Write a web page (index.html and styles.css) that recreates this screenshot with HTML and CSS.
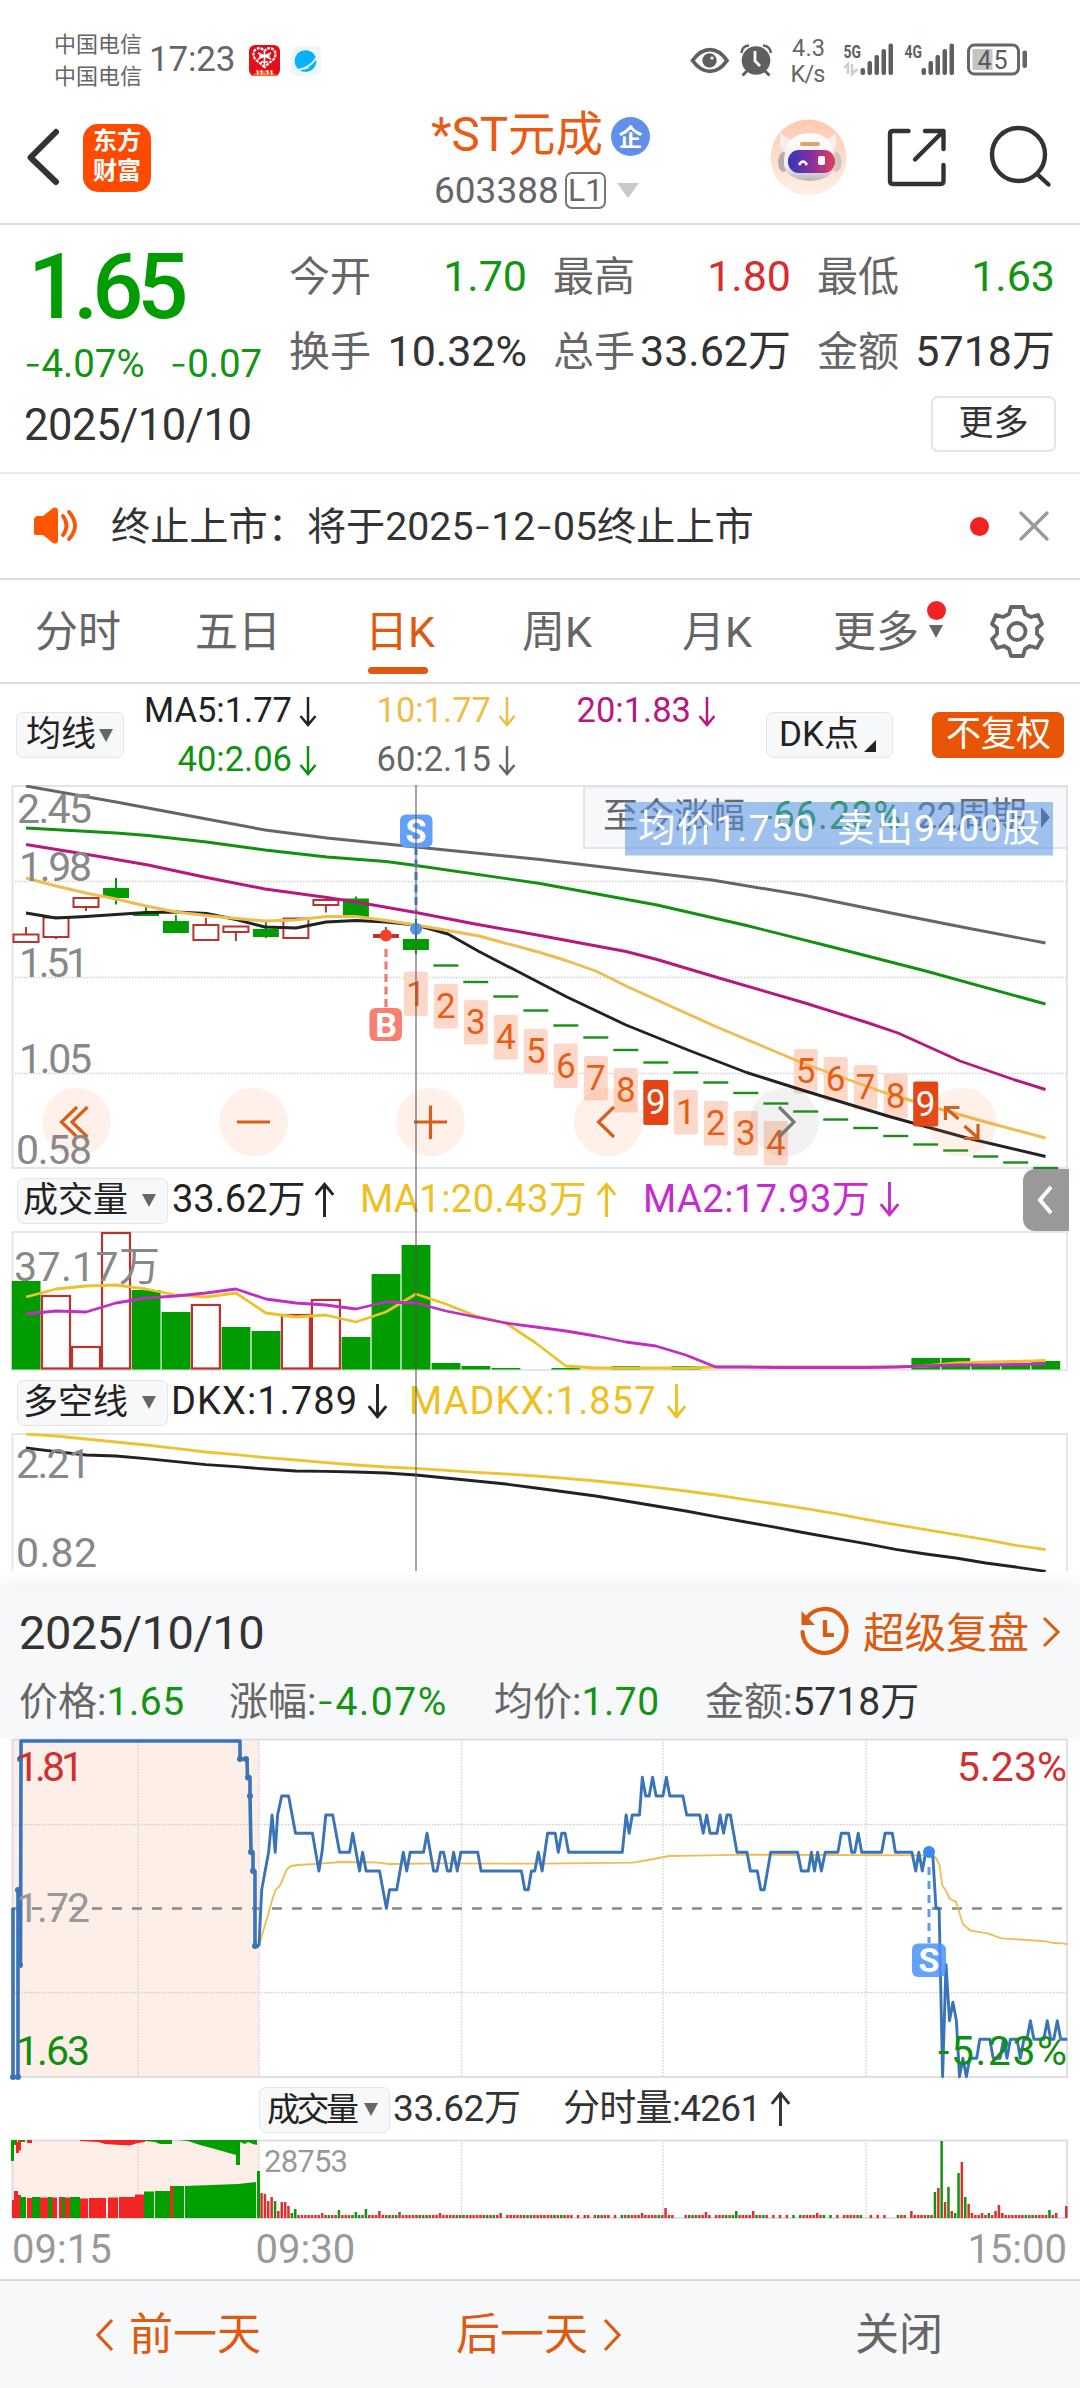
FILE: index.html
```html
<!DOCTYPE html>
<html lang="zh-CN">
<head>
<meta charset="utf-8">
<title>*ST元成 603388</title>
<link rel="stylesheet" href="styles.css">
</head>
<body>
<svg class="defs" aria-hidden="true">
  <symbol id="down" viewBox="0 0 18 30"><path d="M9 0V28M1.5 19L9 28L16.5 19" fill="none" stroke="currentColor" stroke-width="2.5"/></symbol>
  <symbol id="up" viewBox="0 0 18 30"><path d="M9 30V2M1.5 11L9 2L16.5 11" fill="none" stroke="currentColor" stroke-width="2.5"/></symbol>
</svg>
<div class="screen">
  <div class="statusbar">
    <div class="carrier"><span>中国电信</span><span>中国电信</span></div>
    <span class="clock">17:23</span>
    <svg class="app-red" width="31" height="31" viewBox="0 0 31 31"><rect width="31" height="31" rx="6" fill="#e0101a"/><path d="M2 31Q15 20 29 31Z" fill="#f4602c"/><path d="M15.500 22L6 14Q3 9 6 5Q11 1 15.500 6Q20 1 25 5Q28 9 25 14Z" fill="none" stroke="#fff" stroke-width="2.200" stroke-dasharray="3 1"/><path d="M9 8L22 14M22 8L9 14M15.500 7V20M10 11H21M12 17H19" stroke="#fff" stroke-width="1.600"/><text x="15.500" y="30" font-size="7" font-weight="700" fill="#fff" text-anchor="middle">11.11</text></svg>
    <svg class="app-blue" width="30" height="30" viewBox="0 0 30 30"><rect width="30" height="30" rx="6" fill="#eef5fc"/><circle cx="14.500" cy="15" r="10.800" fill="#08b2fb"/><path d="M4 24Q13 24 20 18T26 8" fill="none" stroke="#e9f6ff" stroke-width="1.800"/><path d="M12 22l3-1.500 3-1-1 3-4 1z" fill="#fff"/></svg>
    <svg class="status-icons" width="390" height="60" viewBox="680 30 390 60">
      <g fill="none" stroke="#5f5f5f" stroke-width="3.800"><path d="M693.500 60.500C704 46 718 46 728 60.500C718 75 704 75 693.500 60.500Z"/></g>
      <circle cx="710.500" cy="60.500" r="7.200" fill="#5f5f5f"/><circle cx="713" cy="58" r="1.600" fill="#fff"/>
      <circle cx="757" cy="60.500" r="14.300" fill="#5f5f5f"/><path d="M756 51V61L761 66" stroke="#fff" stroke-width="2.800" fill="none"/>
      <path d="M742.500 53Q743 46 750 45.500M772 53Q771 46 764 45.500" stroke="#5f5f5f" stroke-width="2.500" fill="none"/><path d="M749 70L743.500 75.500M765 70L770.500 75.500" stroke="#5f5f5f" stroke-width="3"/>
      <g fill="#666" font-size="23.500"><text x="793" y="55.500" textLength="33">4.3</text><text x="791.500" y="82" textLength="35">K/s</text></g>
      <g fill="#5f5f5f" font-size="19" font-weight="700"><text x="844.500" y="57.500" textLength="17.500" lengthAdjust="spacingAndGlyphs">5G</text><text x="905.500" y="57.500" textLength="17.500" lengthAdjust="spacingAndGlyphs">4G</text></g>
      <path d="M845 68L849 64V74M853 64V74L857 70M856 70H859" stroke="#ccc" stroke-width="2.400" fill="none"/>
      <g fill="#5f5f5f"><rect x="861.500" y="68" width="4.500" height="7" rx="2"/><rect x="868.500" y="61" width="4.500" height="14" rx="2"/><rect x="875.500" y="55" width="4.500" height="20" rx="2"/><rect x="882.500" y="49" width="4.500" height="26" rx="2"/><rect x="889.500" y="43.500" width="4.500" height="31.500" rx="2"/>
      <rect x="922.500" y="68" width="4.500" height="7" rx="2"/><rect x="929.500" y="61" width="4.500" height="14" rx="2"/><rect x="936.500" y="55" width="4.500" height="20" rx="2"/><rect x="943.500" y="49" width="4.500" height="26" rx="2"/><rect x="950.500" y="43.500" width="4.500" height="31.500" rx="2"/></g>
      <rect x="973.500" y="49" width="20" height="21" fill="#c4c4c4"/><rect x="969.500" y="45" width="50" height="29" rx="6" fill="none" stroke="#666" stroke-width="3"/><rect x="1023.500" y="50.500" width="4.500" height="17.500" rx="2" fill="#666"/>
      <text x="978.500" y="68.500" font-size="25" fill="#5a5a5a" textLength="30">45</text>
    </svg>
  </div>

  <header class="titlebar">
    <svg class="back" width="40" height="60" viewBox="0 0 40 60"><path d="M32 4L6.500 29.500L32 54" fill="none" stroke="#333" stroke-width="6" stroke-linecap="round" stroke-linejoin="round"/></svg>
    <div class="logo"><span>东方</span><span>财富</span></div>
    <div class="stock">
      <div class="stock-name"><span>*ST元成</span><i class="ent">企</i></div>
      <div class="stock-code"><span class="code">603388</span><span class="lv">L1</span><i class="tri-grey"></i></div>
    </div>
    <svg class="head-icons" width="290" height="90" viewBox="765 112 290 90">
      <defs><linearGradient id="halo" x1="0" y1="0" x2="0" y2="1"><stop offset="0" stop-color="#ffc9b0"/><stop offset="1" stop-color="#fff0e9"/></linearGradient><linearGradient id="visor"><stop offset="0" stop-color="#3038b8"/><stop offset=".5" stop-color="#8a2ea0"/><stop offset="1" stop-color="#e0405c"/></linearGradient><linearGradient id="shell" x1="0" y1="0" x2="0" y2="1"><stop offset="0" stop-color="#fff"/><stop offset=".7" stop-color="#f1ecee"/><stop offset="1" stop-color="#b9b2b6"/></linearGradient></defs>
      <circle cx="808.500" cy="157.500" r="38" fill="url(#halo)"/>
      <path d="M781 133Q777 150 787 152L800 140Q788 142 781 133ZM835 133Q839 150 830 152L818 140Q831 141 835 133Z" fill="#f4efef"/>
      <ellipse cx="783.500" cy="162" rx="5.500" ry="10" fill="#b5adb2"/><ellipse cx="836" cy="162" rx="5.500" ry="10" fill="#cfc4c6"/>
      <path d="M784 160Q786 133 810 133Q833 133 835 160Q837 179 810 181Q782 179 784 160Z" fill="url(#shell)"/>
      <rect x="788" y="150" width="47" height="23" rx="11" fill="url(#visor)"/><rect x="800" y="142" width="20" height="4" rx="2" fill="#e5a06c"/><path d="M799 165Q803 158 807 165" stroke="#fff" stroke-width="2.600" fill="none"/><rect x="818" y="156" width="7" height="9" rx="2" fill="#fff"/>
      <g fill="none" stroke="#333" stroke-width="4.400" stroke-linecap="round" stroke-linejoin="round"><path d="M908.500 131H893Q890 131 890 134V181Q890 184 893 184H940.500Q943.500 184 943.500 181V165M925 131H943.500V149M943.500 131L915 159.500"/><circle cx="1018.500" cy="154.500" r="26.500"/><path d="M1037 174L1048.500 184.500"/></g>
    </svg>
  </header>

  <section class="quote">
    <div class="quote-top">
      <div class="price-col"><div class="price">1.65</div><div class="chg"><span><b class="hy">-</b>4.07%</span><span><b class="hy">-</b>0.07</span></div></div>
      <div class="stats">
        <div><label>今开</label><span class="g">1.70</span></div><div><label>最高</label><span class="r">1.80</span></div><div><label>最低</label><span class="g">1.63</span></div>
        <div><label>换手</label><span>10.32%</span></div><div><label>总手</label><span>33.62万</span></div><div><label>金额</label><span>5718万</span></div>
      </div>
    </div>
    <div class="quote-date"><span>2025/10/10</span><button class="more">更多</button></div>
  </section>

  <section class="notice">
    <svg width="48" height="40" viewBox="0 0 48 40"><path d="M1 13Q1 11 4 10H10L20 2Q25 0 25 5V34Q25 39 20 37L10 29H4Q1 29 1 27Z" fill="#fe5500"/><path d="M30 10Q37 20 30 29M36 6Q48 20 36 33" fill="none" stroke="#fe5500" stroke-width="3.800" stroke-linecap="round"/></svg>
    <p>终止上市：将于2025<b class="hy">-</b>12<b class="hy">-</b>05终止上市</p>
    <i class="dot"></i>
    <svg class="close" width="30" height="30" viewBox="0 0 30 30"><path d="M2 2L28 28M28 2L2 28" stroke="#999" stroke-width="3.200" stroke-linecap="round"/></svg>
  </section>

  <nav class="tabs">
    <span>分时</span><span>五日</span><span class="on">日K</span><span>周K</span><span>月K</span><span class="tab-more">更多<i class="tri"></i><i class="dot"></i></span>
    <svg width="54" height="54" viewBox="-27 -27 54 54"><path d="M-6 -24H6L8 -17L14 -14L21 -16L25 -7L20 -3V3L25 8L20 17L13 15L8 18L6 25H-6L-8 18L-13 15L-20 17L-25 8L-20 3V-3L-25 -7L-21 -16L-14 -14L-8 -17Z" fill="none" stroke="#666" stroke-width="3.800" stroke-linejoin="round"/><circle cy=".5" r="8.500" fill="none" stroke="#666" stroke-width="3.800"/></svg>
  </nav>

  <main class="charts">
    <div class="ma-row">
      <button class="pill pill-ma">均线<i class="tri"></i></button>
      <div class="ma-list">
        <span class="c-black">MA5:1.77<svg class="arr"><use href="#down"/></svg></span><span class="c-gold">10:1.77<svg class="arr"><use href="#down"/></svg></span><span class="c-mag">20:1.83<svg class="arr"><use href="#down"/></svg></span>
        <span class="c-green">40:2.06<svg class="arr"><use href="#down"/></svg></span><span class="c-grey">60:2.15<svg class="arr"><use href="#down"/></svg></span>
      </div>
      <button class="pill pill-dk">DK点<i class="corner"></i></button>
      <button class="pill pill-adj">不复权</button>
    </div>
    <svg id="kline" width="1080" height="384" viewBox="0 785 1080 384"></svg>
    <div class="ind-row vol-row">
      <button class="pill pill-ind">成交量<i class="tri"></i></button>
      <span class="i1 c-black">33.62万<svg class="arr"><use href="#up"/></svg></span><span class="i2 c-yel">MA1:20.43万<svg class="arr"><use href="#up"/></svg></span><span class="i3 c-pur">MA2:17.93万<svg class="arr"><use href="#down"/></svg></span>
      <div class="side-tab"><svg width="20" height="30" viewBox="0 0 20 30"><path d="M16 2L5 15L16 28" fill="none" stroke="#fff" stroke-width="4"/></svg></div>
    </div>
    <svg id="volume" width="1080" height="140" viewBox="0 1231 1080 140"></svg>
    <div class="ind-row dkx-row">
      <button class="pill pill-ind">多空线<i class="tri"></i></button>
      <span class="i1 c-black">DKX:1.789<svg class="arr"><use href="#down"/></svg></span><span class="i2 c-yel">MADKX:1.857<svg class="arr"><use href="#down"/></svg></span>
    </div>
    <svg id="dkx" width="1080" height="139" viewBox="0 1433 1080 139"></svg>
    <i class="crosshair"></i>
  </main>

  <section class="replay">
    <div class="replay-head"><span>2025/10/10</span>
      <div class="replay-link"><svg width="54" height="54" viewBox="0 0 54 54"><path d="M8 14A22 22 0 1 1 4.500 27" fill="none" stroke="#dd5a10" stroke-width="4.200" stroke-linecap="round"/><path d="M3.500 6V20H17Z" fill="#dd5a10"/><path d="M27 15V30H36" fill="none" stroke="#dd5a10" stroke-width="4.200"/></svg><span>超级复盘</span><svg width="20" height="32" viewBox="0 0 20 32"><path d="M2 2L16 16L2 30" fill="none" stroke="#dd5a10" stroke-width="3"/></svg></div>
    </div>
    <div class="replay-stats"><span>价格:<em class="g">1.65</em></span><span>涨幅:<em class="g chg-pct"><b class="hy">-</b>4.07%</em></span><span>均价:<em class="g">1.70</em></span><span>金额:<em>5718万</em></span></div>
  </section>

  <svg id="intraday" width="1080" height="342" viewBox="0 1738 1080 342"></svg>
  <div class="mvol-row"><button class="pill pill-mini">成交量<i class="tri"></i></button><span class="m1">33.62万</span><span class="m2">分时量:4261<svg class="arr"><use href="#up"/></svg></span></div>
  <svg id="minvol" width="1080" height="80" viewBox="0 2139 1080 80"></svg>
  <div class="times"><span>09:15</span><span>09:30</span><span>15:00</span></div>

  <footer class="bottom">
    <div class="prev"><svg width="20" height="34" viewBox="0 0 20 34"><path d="M17 2L3 17L17 32" fill="none" stroke="#dd5a10" stroke-width="3.200"/></svg>前一天</div>
    <div class="next">后一天<svg width="20" height="34" viewBox="0 0 20 34"><path d="M3 2L17 17L3 32" fill="none" stroke="#dd5a10" stroke-width="3.200"/></svg></div>
    <div class="shut">关闭</div>
  </footer>
</div>
<script src="charts.js"></script>
</body>
</html>
```

FILE: styles.css
```css
* { box-sizing: border-box; margin: 0; padding: 0; }
body, button { font-family: Roboto, "Noto Sans CJK SC", sans-serif; }
body { width: 1080px; background: #fff; color: #333; }
.screen { width: 1080px; height: 2388px; overflow: hidden; display: flex; flex-direction: column; }
.screen > *, .charts > * { flex: none; }
svg { display: block; }
svg text { font-family: Roboto, "Noto Sans CJK SC", sans-serif; }
.defs { position: absolute; width: 0; height: 0; }
span, p, label, em, button { white-space: nowrap; font-style: normal; }
b.hy { font-family: Inter, sans-serif; font-weight: 300; }
i { display: block; }
.arr { display: inline-block; width: 18px; height: 30px; vertical-align: -5px; margin-left: 7px; }
.tri { width: 0; height: 0; border: 7.5px solid transparent; border-top: 13px solid #666; border-bottom: 0; }
.dot { width: 19px; height: 19px; border-radius: 50%; background: #f12222; }
.g { color: #129512; }
.r { color: #d92d2d; }
.c-black { color: #222; } .c-gold { color: #efbc4c; } .c-mag { color: #b9177f; }
.c-green { color: #0d940d; } .c-grey { color: #666; } .c-yel { color: #efc01f; } .c-pur { color: #c62bcf; }

.statusbar { height: 110px; display: flex; align-items: flex-start; padding: 29px 11px 0 54px; color: #666; }
.carrier { width: 95px; display: flex; flex-direction: column; font-size: 22px; line-height: 32px; }
.clock { width: 100px; font-size: 35px; line-height: 62px; letter-spacing: -.2px; }
.app-red { margin-top: 16px; }
.app-blue { margin: 17px 0 0 11px; }
.status-icons { margin: 1px 0 0 auto; }

.titlebar { height: 115px; border-bottom: 2px solid #dcdcdc; display: flex; align-items: flex-start; padding-left: 24px; }
.back { margin-top: 18px; }
.logo { width: 68px; height: 68px; margin: 14px 0 0 19px; border-radius: 15px; background: #ff4a00; color: #fff; font-weight: 700; font-size: 24px; line-height: 30px; text-align: center; display: flex; flex-direction: column; padding-top: 2px; }
.stock { width: 610px; padding-left: 280px; }
.stock-name { height: 52px; display: flex; align-items: center; font-size: 47.5px; line-height: 52px; color: #ea5a12; gap: 5px; }
.stock-name span { width: 175px; margin-top: -3px; }
.ent { width: 39px; height: 39px; border-radius: 50%; background: #6290e8; color: #fff; font: 700 24px/37px "Noto Sans CJK SC", sans-serif; text-align: center; }
.stock-code { display: flex; align-items: center; height: 57px; font-size: 37px; color: #666; padding-left: 3px; }
.code { width: 131px; }
.lv { width: 41px; height: 37px; border: 2px solid #777; border-radius: 7px; font-size: 32px; line-height: 33px; text-align: center; }
.tri-grey { margin-left: 11px; border: 11px solid transparent; border-top: 15px solid #c9c9c9; border-bottom: 0; }
.head-icons { margin: 2px 0 0 4px; }

.quote { height: 249px; border-bottom: 2px solid #eaeaea; }
.quote-top { display: flex; height: 164px; }
.price-col { width: 289px; padding: 9px 0 0 24px; }
.price { font-size: 90px; line-height: 108px; font-weight: 500; color: #009c00; letter-spacing: -6px; padding-left: 4px; }
.chg { display: flex; font-size: 38.5px; line-height: 42px; gap: 25px; color: #129512; }
.stats { width: 765px; display: grid; grid-template-columns: repeat(3, 238px); column-gap: 26px; grid-auto-rows: 75px; padding-top: 10px; font-size: 43px; }
.stats div { display: flex; justify-content: space-between; align-items: center; }
.stats span { line-height: 60px; padding-top: 6px; }
.stats label { font-size: 41px; color: #666; }
.quote-date { display: flex; justify-content: space-between; align-items: center; height: 70px; padding: 0 24px 0 24px; font-size: 43.500px; letter-spacing: -.4px; }
.quote-date span { padding-top: 3px; }
.more { width: 125px; height: 56px; border: 2px solid #e4e4e4; border-radius: 7px; background: #fff; font-size: 35px; color: #333; line-height: 48px; }

.notice { height: 106px; border-bottom: 2px solid #dcdcdc; display: flex; align-items: center; padding-left: 33px; }
.notice p { font-size: 39.2px; width: 858px; padding: 0 0 6px 30px; }
.notice .dot { margin-left: 31px; }
.notice .close { margin-left: 30px; }

.tabs { height: 104px; border-bottom: 2px solid #dcdcdc; display: grid; grid-template-columns: 160px 170px 157px 160px 151px 157px 60px; align-items: center; padding-left: 35px; font-size: 43px; color: #666; }
.tabs > span { height: 102px; line-height: 104px; }
.on { color: #dd5a10; display: flex; flex-direction: column; }
.on::after { content: ""; width: 60px; height: 7px; margin: -17px 0 0 3px; border-radius: 4px; background: #dd5a10; }
.tab-more { position: relative; }
.tab-more .tri { position: absolute; left: 96px; top: 45px; }
.tab-more .dot { position: absolute; left: 94px; top: 21px; }

.charts { position: relative; }
.pill { display: flex; align-items: center; height: 46px; background: #f7f8fa; border: 1.500px solid #e3e5e8; border-radius: 7px; font-size: 35px; color: #222; line-height: 40px; }
.ma-row { display: flex; height: 101px; }
.pill-ma { width: 108px; margin: 28px 0 0 16px; padding-left: 9px; gap: 3px; }
.pill-dk { width: 127px; margin: 28px 0 0 50px; padding-left: 12px; gap: 5px; }
.pill-adj { width: 132px; margin: 28px 0 0 39px; background: #e95506; border: 0; color: #fff; padding-left: 14px; }
.corner { border-left: 12px solid transparent; border-bottom: 12px solid #222; margin-top: 22px; }
.ma-list { width: 592px; padding-top: 1px; display: grid; grid-template-columns: 193px 199px 200px; grid-auto-rows: 49px; align-items: center; text-align: right; font-size: 34.500px; }
.ind-row { display: flex; align-items: center; height: 62px; font-size: 38px; }
.ind-row .arr, .m2 .arr { width: 21px; height: 35px; vertical-align: -5px; margin-left: 9px; }
.pill-ind { width: 151px; margin: 1px 0 0 17px; padding-left: 5px; gap: 14px; }
.i1, .i2, .i3 { line-height: 54px; margin-bottom: 2px; }
.vol-row .i1 { margin-left: 4px; width: 188px; }
.vol-row .i2 { width: 283px; letter-spacing: .5px; }
.vol-row .i3 { width: 380px; letter-spacing: .5px; }
.dkx-row .i1 { margin-left: 3px; width: 238px; letter-spacing: 1.1px; }
.dkx-row .i2 { letter-spacing: 1.1px; }
.side-tab { width: 46px; height: 62px; background: #999; border-radius: 12px 0 0 12px; padding: 16px 0 0 12px; }
.crosshair { position: absolute; left: 415px; top: 101px; width: 2px; height: 786px; background: rgba(90, 90, 90, .55); }

.replay { height: 149px; margin-top: 17px; padding: 10px 18px 0 19px; background: #f7f8fa; box-shadow: 0 -6px 16px rgba(0, 0, 0, .06); }
.replay-head { display: flex; justify-content: space-between; align-items: center; height: 66px; font-size: 47px; letter-spacing: -.5px; }
.replay-link { display: flex; align-items: center; color: #dd5a10; font-size: 41.5px; letter-spacing: 0; }
.replay-link span { padding: 0 13px 4px 11px; }
.replay-stats { display: grid; grid-template-columns: 210px 265px 211px 240px; height: 66px; align-items: center; font-size: 39px; color: #666; }
.replay-stats em { letter-spacing: .6px; }
.replay-stats .chg-pct { letter-spacing: 1.5px; }
.replay-stats em:not(.g) { color: #333; letter-spacing: 0; }

.mvol-row { display: flex; align-items: center; height: 59px; padding-left: 259px; font-size: 37px; }
.pill-mini { width: 131px; padding-left: 7px; gap: 8px; font-size: 33px; letter-spacing: -3.500px; }
.m1 { margin-left: 3px; width: 170px; letter-spacing: -.4px; line-height: 50px; margin-bottom: 2px; }
.m2 { letter-spacing: -.7px; line-height: 50px; margin-bottom: 2px; }
.times { display: flex; height: 60px; align-items: center; font-size: 40px; color: #999; padding: 0 13px 0 12px; }
.times span:nth-child(2) { margin-left: 144px; }
.times span:nth-child(3) { margin-left: auto; }

.bottom { height: 109px; border-top: 2px solid #d9dbde; background: #f7f8fa; display: flex; font-size: 44px; color: #dd5a10; line-height: 104px; }
.bottom div { display: flex; align-items: center; gap: 14px; }
.prev { padding-left: 95px; width: 456px; }
.next { width: 399px; }
.bottom .shut { color: #666; }
```

FILE: charts.js
```js
const STEP = 29.99, X0 = 26;
const GREEN = '#009c00', RED = '#b93330';
const cx = i => +(X0 + STEP * i).toFixed(1);
const pts = a => a.map(p => p.join(',')).join(' ');
const line = (a, color, w) => `<polyline points="${pts(a)}" fill="none" stroke="${color}" stroke-width="${w}" stroke-linejoin="round"/>`;
const rect = (x, y, w, h, extra) => `<rect x="${x}" y="${y}" width="${w}" height="${h}" ${extra}/>`;
const label = (s, x, y, w, size, color, extra = '') => `<text x="${x}" y="${y}" font-size="${size}" fill="${color}" textLength="${w}" ${extra}>${s}</text>`;
const seg = (x1, y1, x2, y2, color, w, extra = '') => `<line x1="${x1}" y1="${y1}" x2="${x2}" y2="${y2}" stroke="${color}" stroke-width="${w}" ${extra}/>`;
const dotted = (x1, y1, x2, y2) => seg(x1, y1, x2, y2, '#cfcfcf', 1.3, 'stroke-dasharray="1.5 1.5"');

function drawKline() {
  let s = [881.5, 977.5, 1073.5].map(y => dotted(12, y, 1067, y)).join('');
  s += rect(12.5, 786, 1054.5, 382, 'fill="none" stroke="#e3e4e6" stroke-width="2"');

  // [index, top, bottom, high, low, kind]; h = hollow, g = green, r = red
  const candles = [[0,934.5,942,927,943,'h'],[1,917.5,937,917,939,'h'],[2,898,907,898,911,'h'],[3,888,898,878,904.5,'g'],
    [4,912,916,907,916,'g'],[5,921,933,915,933,'g'],[6,925,940,918,941,'h'],[7,926.5,932,926,941,'h'],[8,929,937,922,938,'g'],
    [9,918.5,938,918,938,'h'],[10,900,905,899,912.5,'h'],[11,898.5,917,896.5,917,'g'],[12,934,938,927,938,'r'],[13,939,950,919,954,'g']];
  for (const [i, t, b, hi, lo, k] of candles) {
    const x = cx(i), c = k === 'g' ? GREEN : RED;
    s += seg(x, hi, x, k === 'h' ? t : lo, c, 2);
    if (k === 'h') s += seg(x, b, x, lo, c, 2) + rect(x - 12.5, t, 25, b - t, `fill="none" stroke="${c}" stroke-width="2"`);
    else s += rect(x - 13, t, 26, b - t, `fill="${c}"`);
  }
  [965.5,982,996.5,1010.5,1025.5,1037.5,1050,1062.5,1072.5,1082.5,1093,1103.5,1111.5,1119.5,1128,1136,1144.5,1150.5,1156.5,1162.5,1168]
    .forEach((y, n) => { s += seg(cx(14 + n) - 12.5, y, cx(14 + n) + 12.5, y, '#169016', 2.4); });

  const boxes = [[13,971.5,1],[14,984,2],[15,1000,3],[16,1015,4],[17,1029,5],[18,1043.5,6],[19,1056,7],[20,1068,8],[21,1080,9],
    [22,1090,1],[23,1101,2],[24,1111,3],[25,1121,4],[26,1049,5],[27,1057,6],[28,1065,7],[29,1073.5,8],[30,1081.5,9]];
  for (const [i, y, n] of boxes) if (n !== 9) s += rect(cx(i) - 12, y, 24, 44.5, 'rx="2" fill="#fdd8c8"');

  s += line([[26,786],[116,802],[206.5,819],[265,830],[327,838],[416,847],[540,859.5],[712,880],[805,895.5],[891,913],[967,928],[1045.5,943]], '#666', 2.9);
  s += line([[26,828],[116,833],[148,835.5],[206.5,842],[265,850],[327,857],[386,861.5],[416,865.5],[540,883.5],[657,905],[746.6,925.5],[836,948],[925.7,971],[1045.5,1004]], '#119011', 2.9);
  s += line([[26,844.5],[96.5,856],[148,865],[206.5,877.5],[265,889],[327,897.5],[356,902],[416,912.5],[475,924],[540,935.5],[626,951.5],[657,959.5],[719,978],[805,1003],[867,1022.5],[898,1033],[960,1061],[1015,1080],[1045.5,1089.5]], '#b9177f', 2.9);
  s += line([[26,913],[56,918],[86,916.5],[116,914.5],[146,912.5],[176,912],[206.5,913.5],[236,919.5],[265,927],[296,928],[326,922],[356,920.5],[386,922],[416,925],[448,934],[479,951.5],[540,983],[567,997],[626,1025],[688,1050],[746.6,1072.5],[805,1091],[891,1117],[967,1138],[1045.5,1156.5]], '#222', 2.9);
  s += line([[26,878],[56,886],[86,893],[116,899],[146,906],[176,912],[206.5,915.5],[236,918.5],[265,921],[296,920],[326,916.5],[356,916.5],[386,920.5],[416,925],[448,930.5],[479,936],[540,952.5],[567.5,961],[597,971.5],[626,986],[715.6,1026.5],[805,1064],[884,1092.5],[939.5,1109],[987.6,1122.5],[1045.5,1138]], '#eebc50', 2.9);

  for (const [i, y, n] of boxes) {
    if (n === 9) s += rect(cx(i) - 12.5, y, 25, 45, 'rx="2" fill="#e34515"');
    s += `<text x="${cx(i)}" y="${y + 34}" font-size="35" text-anchor="middle" fill="${n === 9 ? '#fff' : '#e75d17'}">${n}</text>`;
  }

  // buy and sell markers
  s += `<circle cx="386" cy="935.5" r="6" fill="#f1402c"/><circle cx="416" cy="929" r="6" fill="#4f95ea"/>`;
  s += seg(386, 949, 386, 1008, '#f07b70', 3.2, 'stroke-dasharray="8 4.5"') + seg(416, 847, 416, 912, '#4f8fdf', 3.2, 'stroke-dasharray="8 4.5"');
  s += rect(369.5, 1008, 32.5, 33, 'rx="6" fill="#f98070"') + rect(400, 814.5, 32.5, 33, 'rx="6" fill="#62a1fa"');
  s += `<text x="386" y="1036.5" font-size="34" font-weight="700" fill="#fff" text-anchor="middle">B</text><text x="416" y="843" font-size="34" font-weight="700" fill="#fff" text-anchor="middle">S</text>`;

  [76.5, 253.5, 430.5, 608, 784.5, 962].forEach((x, n) => { s += `<circle cx="${x}" cy="1122" r="34.3" fill="${n === 4 ? 'rgba(120,120,120,.1)' : 'rgba(255,130,70,.12)'}"/>`; });
  s += `<g fill="none" stroke="#d5601c" stroke-width="3.2"><path d="M77 1107L61.5 1122L77 1137M87.500 1107L72 1122L87.500 1137M237 1122H270M414 1122H447M430.500 1105.500V1139M614 1107L598.500 1122L614 1137"/><path d="M945.500 1120V1107.500H959.500M946 1108L958.500 1119M964.500 1126L977 1137M978 1124V1138.500H964"/><path d="M779 1107L794 1122L779 1137" stroke="#777"/></g>`;

  [['2.45',823,17],['1.98',881,19],['1.51',976.5,19],['1.05',1072.5,19],['0.58',1164,16]].forEach(([t, y, x]) => { s += label(t, x, y, t === '1.51' ? 70 : 92 - x, 41, '#888'); });

  s += rect(584, 786.5, 483, 61.500, 'fill="#f7f8fb" stroke="#e0e2e5" stroke-width="1.800"');
  s += label('至今涨幅', 603, 828, 142, 35.5, '#666') + label('-66.28%', 762, 829, 139, 38, '#129512') + label('22周期', 917, 828, 110, 36, '#666');
  s += `<path d="M1041 807V828L1050 817.500Z" fill="#555"/>`;
  s += rect(625, 802, 428, 53.500, 'fill="#5793e4" fill-opacity=".55"');
  s += label('均价1.750', 638, 841, 176, 37.5, '#fff') + label('卖出9400股', 837, 841, 203, 37.5, '#fff');
  document.getElementById('kline').innerHTML = s;
}

function drawVolume() {
  const base = 1369.5;
  let s = rect(12.5, 1232, 1054.5, 138, 'fill="none" stroke="#e3e4e6" stroke-width="1.800"');
  const tops = {0:1281,1:'h1295',2:'h1346',3:'h1232',4:1290,5:1312,6:'h1304',7:1327,8:1331,9:'h1314',10:'h1299',11:1337,12:1274,13:1245,14:1363,15:1366,16:1368,18:1368,20:1366,22:1366,30:1358,31:1358,32:1365,33:1365,34:1361};
  for (const i in tops) {
    const v = tops[i], x = cx(i);
    if (typeof v === 'string') { const y = +v.slice(1); s += rect(x - 14, y + 1, 28, base - y - 2, 'fill="#fff" stroke="#b93330" stroke-width="2.200"'); }
    else s += rect(x - 14.3, v, 28.8, base - v, `fill="${GREEN}"`);
  }
  const ma1 = [1297,1289,1286,1285,1289,1295,1297,1293,1313,1317,1315,1322,1312,1294,1304,1316,1323,1343,1366,1368,1368,1368,1368,1367,1367,1367,1367,1367,1367,1367,1366,1363,1362,1361.5,1360.5];
  const ma2 = [1314,1311,1312,1303,1298,1296,1293,1289,1299,1303,1305,1309,1302,1303,1311,1317,1323,1327,1331,1336,1342,1346,1355,1367,1367,1367.5,1367.5,1367.5,1367.5,1367,1366,1365,1365,1364.5,1364];
  s += line(ma1.map((y, i) => [cx(i), y]), '#ecc22a', 2.8) + line(ma2.map((y, i) => [cx(i), y]), '#c02ec4', 2.8);
  s += label('37.17万', 14, 1281, 146, 41, '#888');
  document.getElementById('volume').innerHTML = s;
}

function drawDkx() {
  const yel = [822,828,837,846,855,865,876,884,893,900,908,915,921,925,931,937,942,948,955,963,972,982,993,1005,1019,1032,1046,1061,1078,1094,1109,1124,1139,1156,1169];
  const blk = [864,875,885,888,896,905,914,920,927,933,934,936,939,945,954,963,972,984,996,1008,1023,1038,1053,1070,1086,1102,1119,1135,1151,1168,1182,1194,1209,1221,1234];
  let s = `<path d="M12.500 1571V1434H1067V1571" fill="none" stroke="#e3e4e6" stroke-width="1.800"/>`;
  s += line(blk.map((v, i) => [cx(i), 1160 + v / 3]), '#222', 2.8) + line(yel.map((v, i) => [cx(i), 1160 + v / 3]), '#ecc433', 2.8);
  s += label('2.21', 16, 1478, 75, 41, '#888') + label('0.82', 16, 1567, 81, 41, '#888');
  document.getElementById('dkx').innerHTML = s;
}

function drawIntraday() {
  // time axis is stored in 1/2.9037 px units, prices in thirds of a pixel from the panel top
  const map = (a, off = 0) => a.map(([x, y]) => [((x + off) / 2.9037).toFixed(1), (1730 + y / 3).toFixed(1)]);
  let s = rect(12, 1739, 247, 338, 'fill="#fdeee8"');
  s += [138, 259, 461.5, 663, 866].map(x => dotted(x, 1739, x, 2077)).join('') + [1824.5, 1992.5].map(y => dotted(12, y, 1067, y)).join('');
  s += rect(12.5, 1739.5, 1054.5, 337.5, 'fill="none" stroke="#dcdde0" stroke-width="1.800"');
  s += seg(12, 1908.5, 1067, 1908.5, '#888', 2.4, 'stroke-dasharray="10 10"');
  s += line([...map([[752,648],[765,600],[780,550],[790,510],[800,480],[812,468],[822,445],[833,418],[845,408],[865,405],[930,401],[990,396],[1090,397],[1130,402],[1260,400],[1568,401]]),
    ...map([[270,398],[330,387],[375,378],[450,377],[600,374],[1140,376],[1150,384],[1160,405],[1168,465],[1180,485],[1190,507],[1208,515],[1218,550],[1228,582],[1250,602],[1300,610],[1340,625],[1470,634],[1490,639],[1520,640],[1531,643]], 1568)], '#eebc50', 1.8);
  const blue = '#3a74b8';
  s += line([[13,1908],[13,2077],[18,2077],[18,1890],[20,1890],[20,1965],[20.500,1965],[21,1759],[21,1741],[240,1741],[240,1759],[247,1759],[247.500,1777],[250,1777],[250,1796],[251,1852],[253,1852],[253,1871],[255,1871],[255,1946],[259,1946]], blue, 3.6);
  [[13,2077],[18,2077],[18,1890],[20,1965],[20,1759],[240,1759],[246,1759],[248,1777.500],[250,1796],[251,1852],[253,1871],[255,1946]].forEach(([x, y]) => { s += `<circle cx="${x}" cy="${y}" r="3" fill="${blue}"/>`; });
  s += line([...map([[752,648],[760,479],[780,367],[790,255],[799,367],[806,255],[818,198],[838,198],[858,310],[907,310],[926,423],[935,367],[946,255],[966,255],[986,367],[1015,367],[1024,310],[1044,423],[1053,367],[1063,423],[1102,423],[1122,535],[1131,479],[1152,479],[1171,367],[1181,423],[1191,367],[1230,367],[1240,310],[1259,423],[1269,423],[1279,367],[1288,367],[1299,423],[1308,423],[1317,367],[1328,423],[1338,367],[1387,367],[1397,423],[1514,423],[1524,479],[1534,479],[1543,423],[1553,423],[1563,367]]),
    ...map([[6,423],[22,310],[44,310],[53,367],[63,310],[73,310],[83,367],[239,367],[250,255],[259,310],[268,255],[289,255],[297,142],[307,198],[317,198],[327,142],[337,198],[357,198],[367,142],[377,198],[415,198],[426,255],[464,255],[474,310],[484,255],[494,310],[514,310],[523,255],[533,310],[543,255],[553,255],[572,367],[601,367],[611,423],[631,423],[641,479],[651,479],[670,367],[748,367],[759,423],[779,423],[788,367],[797,423],[806,367],[817,423],[828,367],[865,367],[875,310],[896,310],[905,367],[914,367],[924,310],[934,367],[992,367],[1002,310],[1023,310],[1032,367],[1080,367],[1091,423],[1100,367],[1110,423],[1120,367],[1140,367],[1150,535],[1159,535],[1169,1040],[1179,704],[1189,872],[1199,817],[1209,872],[1218,1040],[1228,985],[1238,1040],[1248,985],[1268,985],[1277,928],[1306,928],[1316,985],[1336,985],[1346,928],[1356,985],[1366,928],[1385,928],[1395,985],[1405,928],[1414,928],[1424,872],[1434,928],[1463,928],[1473,872],[1483,928],[1492,928],[1502,872],[1512,928],[1531,928]], 1568)], blue, 2.9);
  s += `<circle cx="929" cy="1852" r="6" fill="#3a86f5"/>` + seg(929, 1867, 929, 1943, '#5b9bf0', 3, 'stroke-dasharray="8 6"');
  s += rect(912, 1943.500, 34, 33.500, 'rx="6" fill="#4b93fa" fill-opacity=".86"') + `<text x="929" y="1972" font-size="34" font-weight="700" fill="#fff" text-anchor="middle">S</text>`;
  s += label('1.81', 16, 1780.5, 68, 41, '#d03030') + label('1.72', 16, 1922, 74, 41, '#999') + label('1.63', 16, 2065, 74, 41, '#109010');
  s += label('5.23%', 957, 1780.5, 110, 41, '#d03030') + label('-5.23%', 938, 2065, 129, 41, '#109010');
  document.getElementById('intraday').innerHTML = s;
}

function drawMinuteVolume() {
  const R = '#f12525', G = '#00a000';
  let s = rect(12, 2140, 247, 78, 'fill="#fdeee8"');
  s += [138, 259, 461.5, 663, 866].map(x => dotted(x, 2140, x, 2218)).join('');
  s += rect(12.5, 2140.5, 1054.5, 77.5, 'fill="none" stroke="#dcdde0" stroke-width="1.800"');
  const poly = (a, c) => `<polygon points="${pts(a)}" fill="${c}"/>`;
  // call auction: unmatched volume hangs from the top, matched volume rises from the base
  s += rect(11, 2140, 3, 21, `fill="${G}"`) + rect(14, 2140, 3, 5, `fill="${G}"`) + rect(16, 2142, 3, 11, `fill="${R}"`) + rect(18, 2140, 3, 10.500, `fill="${R}"`) + rect(21, 2140, 4, 2, `fill="${G}"`) + rect(27, 2140, 5, 3, `fill="${R}"`);
  s += poly([[80,2140],[145,2140],[145,2142],[136,2143.5],[130,2145.5],[120,2145],[105,2144],[98,2142],[80,2141]], R);
  s += poly([[145,2140],[172,2140],[172,2144],[160,2144],[155,2142],[145,2141]], G) + poly([[178,2140],[240,2140],[240,2165],[236,2165],[236,2155],[215,2149],[200,2145],[188,2141]], G) + poly([[240,2140],[257,2140],[257,2145],[253,2144],[248,2142],[245,2144],[240,2142]], G);
  const base = 2218;
  [[12,14,2200,R],[14,18,2191,R],[18,21,2195,R],[20,26,2197,G],[27,32,2198,R],[32,40,2197,G],[40,48,2197.5,R],[48,52,2197,G],[52,57,2197.5,R],[59,62,2197,R],[62,65,2197,G],[65,70,2197.5,R],[70,80,2197,G],[80,88,2198.500,R],[89,106,2198,R],[108,118,2197.5,R],[119,135,2197,R],[135,144,2194.500,R],[144,154,2191.500,G],[155,170,2191,G],[170,173,2186,R],[173,184,2186,G]]
    .forEach(([a, b, y, c]) => { s += rect(a, y, b - a, base - y, `fill="${c}"`); });
  s += poly([[185,base],[185,2186],[238,2184],[256,2182],[256,base]], G) + rect(257, 2171, 3, 47, `fill="${G}"`);

  // continuous session, one bar a minute; named bars are the ones above the usual low level
  const tall = {0:['r',25],1:['r',24],2:['r',17],3:['r',21],4:['g',17],5:['r',7],6:['r',16],7:['r',16],8:['r',12],9:['g',5],10:['g',9],18:['r',5],23:['g',8],28:['g',6],31:['g',9],35:['r',7],41:['r',6],53:['r',5],71:['r',5],113:['r',5],120:['r',10],132:['r',6],141:['g',7],146:['r',7],165:['r',5],193:['r',7],
    200:['g',26],201:['r',30],202:['g',77],203:['r',16],204:['g',31],205:['r',7],206:['g',5],207:['g',45],208:['r',56],209:['g',21],210:['r',14],211:['r',5],214:['r',5],216:['g',5],218:['r',7],219:['r',13],220:['r',5],234:['g',8],236:['r',5],239:['r',12]};
  const empty = new Set([72,93,95,98,104,106,123,124,125,134,151,153,155,157,159,168,170,172,179,180,182,184,186,187,188,192,237,238]);
  for (let m = 0; m < 240; m++) {
    if (empty.has(m)) continue;
    const t = tall[m] || [(m * 7 + (m >> 2)) % 5 === 0 ? 'g' : 'r', 3];
    s += rect((260.3 + m * 3.367).toFixed(1), base - t[1], 2.5, t[1], `fill="${t[0] === 'r' ? '#d8312f' : '#0f9410'}"`);
  }
  s += label('28753', 264, 2172, 84, 31, '#999');
  document.getElementById('minvol').innerHTML = s;
}

drawKline();
drawVolume();
drawDkx();
drawIntraday();
drawMinuteVolume();
```
